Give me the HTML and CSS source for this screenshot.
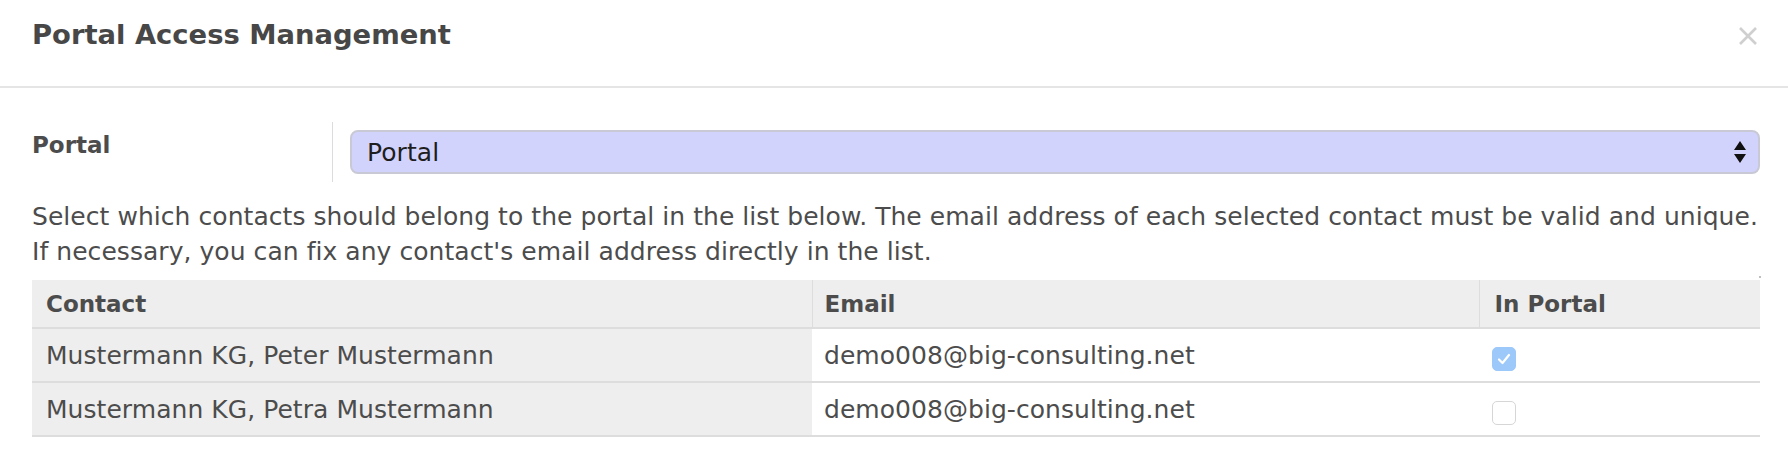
FILE: index.html
```html
<!DOCTYPE html>
<html>
<head>
<meta charset="utf-8">
<link rel="stylesheet" href="styles.css">
</head>
<body>
<div class="dialog">
  <header class="modal-header">
    <h4 class="modal-title">Portal Access Management</h4>
    <button class="close" aria-label="Close">
      <svg width="20" height="20" viewBox="0 0 20 20"><path d="M2 2 L18 18 M18 2 L2 18" stroke="#cfcfcf" stroke-width="2.6" fill="none"/></svg>
    </button>
  </header>
  <div class="modal-body">
    <div class="field-row">
      <div class="field-label">Portal</div>
      <div class="field-sep"></div>
      <div class="select">
        <span class="select-value">Portal</span>
        <svg class="select-arrows" width="12" height="22" viewBox="0 0 12 22"><path d="M6 0 L12 9 L0 9 Z M0 13 L12 13 L6 22 Z" fill="#111"/></svg>
      </div>
    </div>
    <p class="desc">Select which contacts should belong to the portal in the list below. The email address of each selected contact must be valid and unique.<br>If necessary, you can fix any contact's email address directly in the list.</p>
    <div class="table-wrap">
      <table class="contacts">
        <thead>
          <tr><th class="col-contact">Contact</th><th class="col-email">Email</th><th class="col-portal">In Portal</th></tr>
        </thead>
        <tbody>
          <tr>
            <td class="col-contact">Mustermann KG, Peter Mustermann</td>
            <td class="col-email">demo008@big-consulting.net</td>
            <td class="col-portal"><span class="check checked"><svg width="16" height="14" viewBox="0 0 16 14"><path d="M3 7.5 L6.5 11 L13 3" stroke="#fff" stroke-width="2.2" fill="none" stroke-linecap="round" stroke-linejoin="round"/></svg></span></td>
          </tr>
          <tr>
            <td class="col-contact">Mustermann KG, Petra Mustermann</td>
            <td class="col-email">demo008@big-consulting.net</td>
            <td class="col-portal"><span class="check"></span></td>
          </tr>
        </tbody>
      </table>
    </div>
  </div>
</div>
</body>
</html>
```

FILE: styles.css
```css
html, body {
  margin: 0;
  padding: 0;
  background: #fff;
}
body {
  font-family: "DejaVu Sans", "Liberation Sans", sans-serif;
  color: #4c4c4c;
  font-size: 25px;
  letter-spacing: 0.05px;
}
.dialog {
  width: 1788px;
}
.modal-header {
  height: 86px;
  border-bottom: 2px solid #e5e5e5;
  display: flex;
  align-items: center;
  justify-content: space-between;
  padding: 0 30px 0 32px;
  box-sizing: content-box;
}
.modal-title {
  margin: 0;
  font-size: 27.4px;
  font-weight: bold;
  color: #474747;
  line-height: 1;
  letter-spacing: 0;
  padding-bottom: 16px;
}
.close {
  border: none;
  background: transparent;
  padding: 0;
  width: 20px;
  height: 20px;
  margin-bottom: 14px;
}
.close svg { display: block; }
.modal-body {
  padding: 34px 28px 0 32px;
}
.field-row {
  display: grid;
  grid-template-columns: 300px 1px 1fr;
  align-items: start;
}
.field-label {
  font-weight: bold;
  font-size: 23px;
  letter-spacing: 0;
  padding-top: 10px;
  padding-left: 0;
}
.field-sep {
  height: 60px;
  background: #dcdcdc;
}
.select {
  margin-top: 8px;
  margin-left: 17px;
  height: 44px;
  box-sizing: border-box;
  border: 2px solid #c9c9d6;
  border-radius: 8px;
  background: #d2d3fc;
  display: flex;
  align-items: center;
  justify-content: space-between;
  padding: 0 12px 0 15px;
  color: #1e1e1e;
}
.select-value { font-size: 25px; }
.select-arrows { display: block; }
.desc {
  margin: 17px 0 0 0;
  line-height: 35px;
  white-space: nowrap;
}
.table-wrap {
  margin-top: 11px;
  position: relative;
}
.table-wrap::after {
  content: "";
  position: absolute;
  right: -1px;
  top: -4px;
  width: 2px;
  height: 2px;
  background: #aaa;
  border-radius: 1px;
}
.contacts {
  width: 100%;
  border-collapse: collapse;
  table-layout: fixed;
}
.contacts th,
.contacts td {
  box-sizing: border-box;
}
.contacts th {
  background: #eeeeee;
  text-align: left;
  font-weight: bold;
  font-size: 23px;
  letter-spacing: 0;
  height: 48px;
  padding: 0 12px;
  border-bottom: 2px solid #dddddd;
  border-left: 1px solid #dddddd;
}
.contacts th:first-child { border-left: none; }
.contacts td {
  height: 54px;
  padding: 0 12px;
  border-bottom: 2px solid #dddddd;
  vertical-align: middle;
}
.col-contact { width: 780px; padding-left: 14px !important; }
.contacts td.col-contact { background: #eeeeee; }
.col-email { width: 667px; }
.contacts th.col-portal { padding-left: 15px; }
.contacts td.col-portal { padding-left: 13px; }
.check {
  display: inline-block;
  width: 24px;
  height: 24px;
  box-sizing: border-box;
  border: 1px solid #d6d6d6;
  border-radius: 5px;
  background: #fff;
  vertical-align: middle;
  position: relative;
  top: 2px;
}
.check.checked {
  background: #9dc9fa;
  border-color: #9dc9fa;
  display: inline-flex;
  align-items: center;
  justify-content: center;
}
```
